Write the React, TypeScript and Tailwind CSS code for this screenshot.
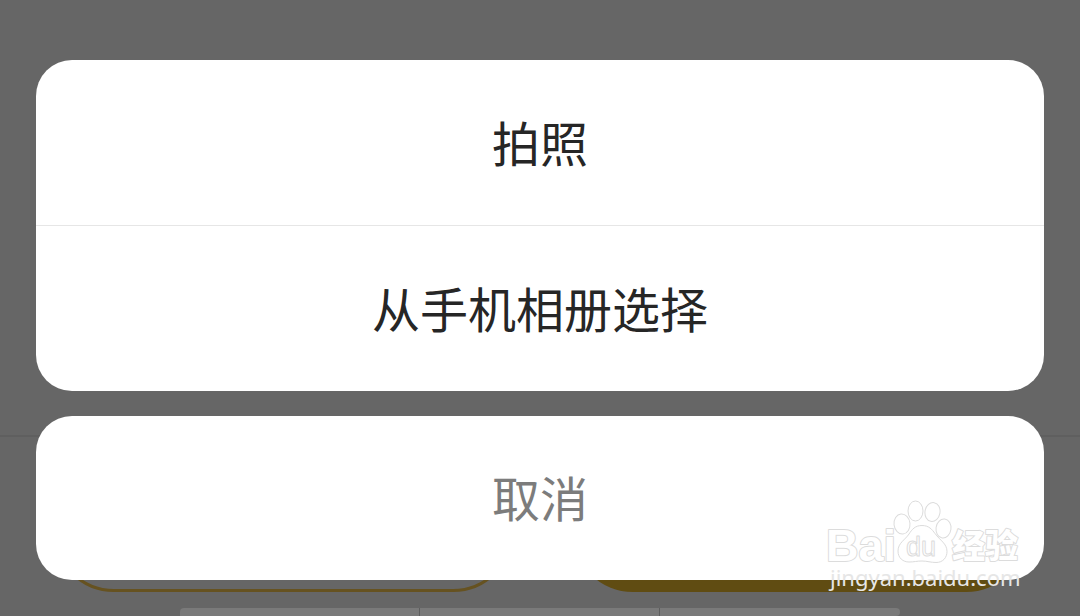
const options = ["拍照", "从手机相册选择"];

function DimmedPage() {
  return (
    <div className="col-start-1 row-start-1 flex flex-col bg-[#666666]" aria-hidden="true">
      <div className="h-[435px] border-b-2 border-[#5f5f5f] box-content" />
      <div className="flex gap-[60px] px-[54px] pt-[35px]">
        <div className="h-[120px] flex-1 rounded-full border-3 border-[#665220]" />
        <div className="h-[120px] flex-1 rounded-full bg-[#604c12]" />
      </div>
      {/* Bottom tab strip */}
      <div className="mx-auto mt-4 grid h-2 w-2/3 grid-cols-3 divide-x divide-[#5e5e5e] overflow-hidden rounded-tl rounded-r bg-[#7a7a7a]">
        <span />
        <span />
        <span />
      </div>
    </div>
  );
}

function Watermark() {
  return (
    <svg
      className="pointer-events-none absolute right-[54px] bottom-[18px] z-20 h-[100px] w-[204px]"
      viewBox="822 498 204 100"
      role="img"
      aria-label="Baidu 经验 jingyan.baidu.com"
    >
      <g fill="#ffffff" stroke="#dcdcdc" strokeWidth="1" strokeLinejoin="round">
        <text
          x="826"
          y="561"
          fontSize="45"
          fontWeight="700"
          strokeWidth="2"
          paintOrder="stroke"
          fontFamily="'Liberation Sans', Arial, sans-serif"
        >
          Bai
        </text>
        <ellipse cx="902" cy="524" rx="8" ry="10" transform="rotate(-6 902 524)" />
        <ellipse cx="915.5" cy="511" rx="7.5" ry="10" />
        <ellipse cx="932.5" cy="512" rx="7.5" ry="9.5" transform="rotate(10 932.5 512)" />
        <ellipse cx="943.5" cy="528.5" rx="7.5" ry="9.5" transform="rotate(8 943.5 528.5)" />
        <path d="M922 525.5c-7 0-10 4-13 8.500-4 6-11 9-11 17 0 7 5 11 11 11 5 0 8-1 13-1s9 1.500 14 1.500c7 0 11-5 11-11 0-8-7-11-12-18-3-4-6-8-13-8z" />
        <text x="906" y="556" fontSize="27" fontFamily="'Liberation Sans', Arial, sans-serif">
          du
        </text>
        <text
          x="952"
          y="558"
          fontSize="33"
          fontWeight="900"
          strokeWidth="2"
          paintOrder="stroke"
          fontFamily="'Noto Sans CJK SC', sans-serif"
        >
          经验
        </text>
      </g>
      <text x="830" y="586" fontSize="22" fill="#e6e6e6" fontFamily="'Noto Sans', sans-serif">
        jingyan.baidu.com
      </text>
    </svg>
  );
}

export default function App() {
  return (
    <main
      className="relative grid h-screen grid-cols-1 overflow-hidden font-['Noto_Sans_CJK_SC',sans-serif]"
      lang="zh-CN"
    >
      <DimmedPage />

      <div className="z-10 col-start-1 row-start-1 flex flex-col gap-[25px] px-9 pt-[60px]">
        <div className="divide-y divide-[#e6e6e6] overflow-hidden rounded-[36px] bg-white">
          {options.map((label) => (
            <button
              key={label}
              type="button"
              className="block w-full pt-[47px] pb-[49px] text-5xl leading-[69px] text-[#262626]"
            >
              {label}
            </button>
          ))}
        </div>
        <button
          type="button"
          className="block w-full rounded-[36px] bg-white pt-[46px] pb-[49px] text-5xl leading-[69px] text-[#7c7c7c]"
        >
          取消
        </button>
      </div>

      <Watermark />
    </main>
  );
}
